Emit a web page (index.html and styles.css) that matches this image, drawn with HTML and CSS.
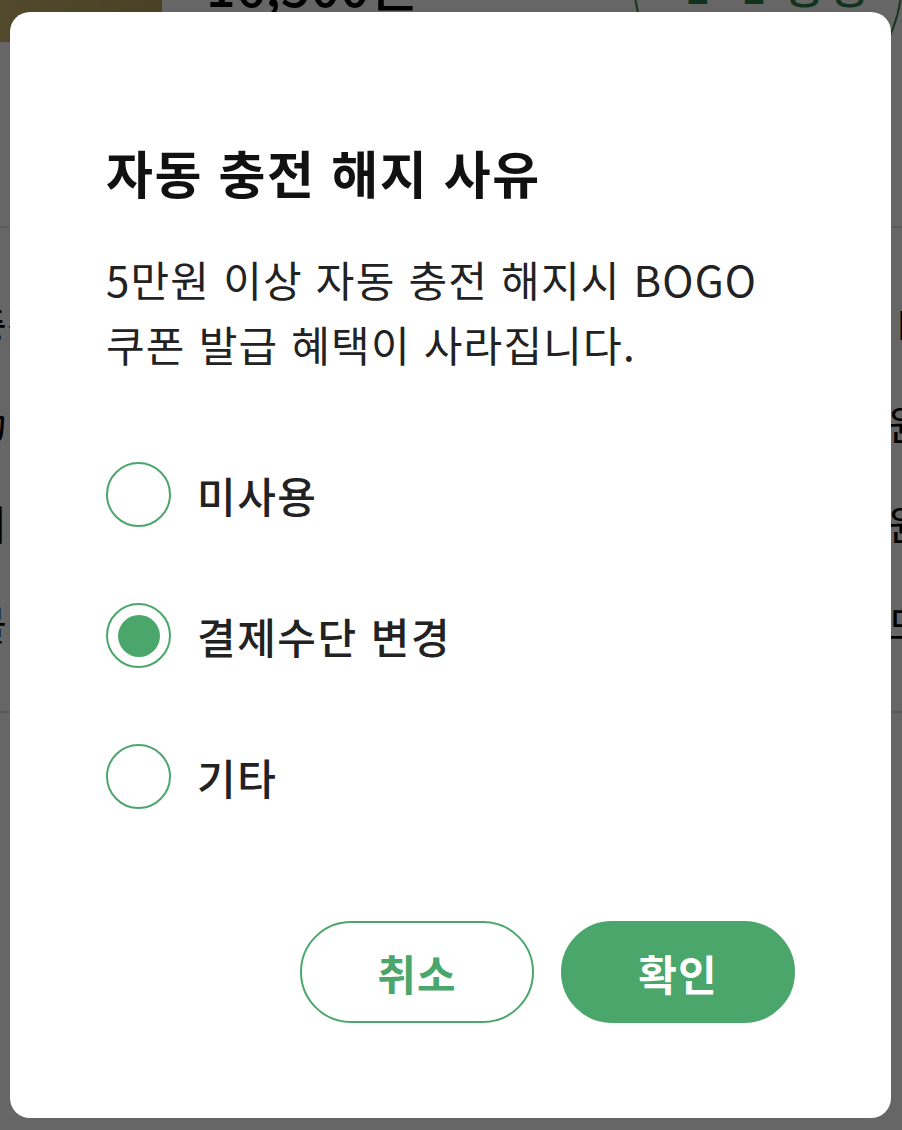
FILE: index.html
```html
<!DOCTYPE html>
<html lang="ko">
<head>
<meta charset="utf-8">
<title>자동 충전 해지 사유</title>
<link rel="stylesheet" href="styles.css">
</head>
<body>
<div class="page">
  <div class="top">
    <div class="thumb"></div>
    <div class="price">16,500원</div>
    <div class="badge"><span>1+1 증정</span></div>
  </div>
  <div class="list">
    <div class="row"><span class="lab">충전</span><span class="val">D</span></div>
    <div class="row"><span class="lab">カ</span><span class="val">원</span></div>
    <div class="row"><span class="lab">지</span><span class="val">원</span></div>
    <div class="row"><span class="lab">블</span><span class="val">드</span></div>
  </div>
</div>
<div class="overlay"></div>
<div class="modal" role="dialog">
  <h1 class="title">자동 충전 해지 사유</h1>
  <p class="desc">5만원 이상 자동 충전 해지시 BOGO<br>쿠폰 발급 혜택이 사라집니다.</p>
  <div class="options">
    <div class="option"><span class="radio"></span><span class="label">미사용</span></div>
    <div class="option"><span class="radio checked"></span><span class="label">결제수단 변경</span></div>
    <div class="option"><span class="radio"></span><span class="label">기타</span></div>
  </div>
  <div class="actions">
    <button class="btn cancel">취소</button>
    <button class="btn ok">확인</button>
  </div>
</div>
</body>
</html>
```
FILE: styles.css
```css
* { box-sizing: border-box; }
html, body { margin: 0; padding: 0; }
body {
  width: 902px;
  height: 1130px;
  overflow: hidden;
  position: relative;
  background: #fff;
  font-family: "Noto Sans CJK KR", "Noto Sans", sans-serif;
  color: #222;
}
.page { width: 902px; height: 1130px; }
.top {
  height: 228px;
  border-bottom: 2px solid #e4e4e4;
  display: flex;
  align-items: flex-start;
  position: relative;
}
.thumb {
  width: 162px;
  height: 42px;
  background: linear-gradient(90deg, #cdb872, #b9a25e);
}
.price {
  margin-left: 44px;
  margin-top: -44px;
  font-size: 52px;
  line-height: 58px;
  font-weight: 500;
  color: #000;
}
.badge {
  position: absolute;
  left: 633px;
  top: -155px;
  width: 270px;
  height: 270px;
  border: 2px solid #3b8a57;
  border-radius: 50%;
  display: flex;
  justify-content: center;
  align-items: flex-start;
}
.badge span {
  color: #2e7d4a;
  font-size: 44px;
  font-weight: 500;
  line-height: 44px;
  margin-top: 116px;
  margin-left: 20px;
  letter-spacing: 3px;
}
.list {
  display: flex;
  flex-direction: column;
  gap: 50px;
  padding: 70px 0 0;
  height: 485px;
  border-bottom: 2px solid #e4e4e4;
}
.row {
  display: flex;
  justify-content: space-between;
  font-size: 40px;
  line-height: 50px;
  color: #000;
}
.lab { margin-left: -30px; }
.val { margin-right: -22px; }

.overlay {
  position: absolute;
  inset: 0;
  background: rgba(0, 0, 0, 0.6);
}
.modal {
  position: absolute;
  left: 10px;
  top: 12px;
  width: 881px;
  height: 1106px;
  background: #fff;
  border-radius: 20px;
  padding: 130px 96px 95px;
  display: flex;
  flex-direction: column;
}
.title {
  margin: 0;
  font-size: 51px;
  line-height: 60px;
  font-weight: 700;
  letter-spacing: 1.5px;
  color: #111;
}
.desc {
  margin: 44px 0 0;
  font-size: 42px;
  line-height: 65px;
  font-weight: 400;
  letter-spacing: 1.2px;
  color: #222;
}
.options {
  margin-top: 86px;
  display: flex;
  flex-direction: column;
  gap: 76px;
}
.option {
  display: flex;
  align-items: center;
  height: 65px;
}
.radio {
  width: 65px;
  height: 65px;
  border: 2px solid #4aa66a;
  border-radius: 50%;
  flex: none;
  display: flex;
  align-items: center;
  justify-content: center;
}
.radio.checked::after {
  content: "";
  width: 42px;
  height: 42px;
  border-radius: 50%;
  background: #4aa66a;
}
.label {
  margin-left: 26px;
  font-size: 42px;
  font-weight: 500;
  letter-spacing: 1.5px;
  color: #222;
}
.actions {
  margin-top: auto;
  display: flex;
  justify-content: flex-end;
  gap: 27px;
}
.btn {
  width: 234px;
  height: 102px;
  border-radius: 51px;
  font-family: inherit;
  font-size: 42px;
  font-weight: 700;
  letter-spacing: 1px;
  cursor: pointer;
  padding: 0;
}
.cancel {
  background: #fff;
  border: 2px solid #4aa66a;
  color: #4aa66a;
}
.ok {
  background: #4aa66a;
  border: 2px solid #4aa66a;
  color: #fff;
}
```
